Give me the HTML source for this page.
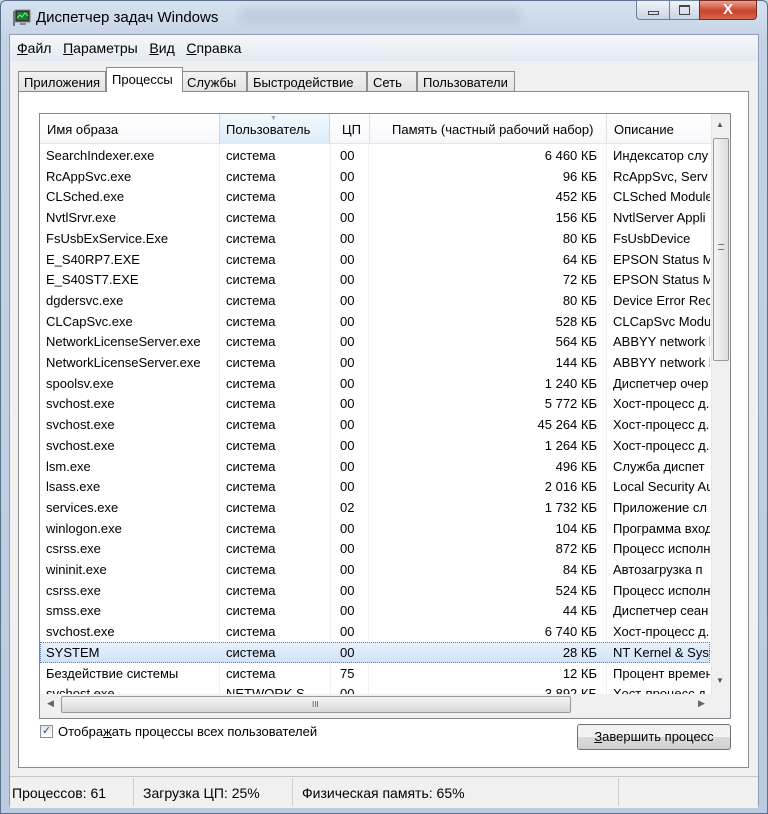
<!DOCTYPE html>
<html><head><meta charset="utf-8"><style>
*{box-sizing:border-box;margin:0;padding:0}
body{width:768px;height:814px;overflow:hidden;background:#c4d3e6;font-family:"Liberation Sans","DejaVu Sans",sans-serif;font-size:13px;color:#000;position:relative}
.a{position:absolute;white-space:nowrap}
.frame{position:absolute;left:0;top:0;width:768px;height:814px;background:linear-gradient(#d6e2f0,#c3d2e5 40px,#bccbdf);border:1px solid #5a6f8a;border-radius:6px 6px 0 0}
.inner{position:absolute;left:9px;top:34px;width:750px;height:772px;background:#f0f0f0;border:1px solid #8e9fb5}
.menu{position:absolute;left:10px;top:35px;width:748px;height:26px;background:linear-gradient(#f5f8fc,#e3e9f2)}
.tab{position:absolute;top:70px;height:22px;background:linear-gradient(#f2f2f2,#e1e1e1);border:1px solid #8c8c8c;border-bottom:none;padding:3px 5px 0;font-size:13px}
.panel{position:absolute;left:18px;top:91px;width:731px;height:677px;background:#fff;border:1px solid #8c8c8c}
.list{position:absolute;left:39px;top:113px;width:692px;height:606px;border:1px solid #828790;background:#fff;overflow:hidden}
.row{position:absolute;left:0;height:21px;width:670px}
.row span{position:absolute;top:3px;white-space:nowrap}
.status{position:absolute;left:10px;top:776px;width:748px;height:32px;background:#f0f0f0;border-top:1px solid #c8c8c8}
u{text-decoration:underline}
</style></head><body>
<div class="frame"></div>
<svg class="a" style="left:12px;top:8px" width="20" height="20" viewBox="0 0 20 20"><rect x="3" y="2" width="15" height="12" fill="#2a3a2a" stroke="#888"/><rect x="5" y="4" width="11" height="8" fill="#1f7a3a"/><polyline points="5,10 8,7 10,9 13,5 16,8" stroke="#6f6" fill="none"/><rect x="8" y="15" width="6" height="2" fill="#888"/><rect x="1" y="3" width="2" height="15" fill="#777"/></svg>
<div class="a" style="left:36px;top:9px;font-size:15px;color:#000">Диспетчер задач Windows</div>
<div class="a" style="left:240px;top:8px;width:280px;height:16px;background:#b8c6d8;filter:blur(4px);opacity:.7"></div>
<div class="a" style="left:636px;top:0;width:34px;height:20px;border:1px solid #6a7f99;border-radius:0 0 0 4px;background:linear-gradient(#eef3f9,#c8d5e5)"><div class="a" style="left:11px;top:10px;width:11px;height:4px;border:1px solid #444"></div></div>
<div class="a" style="left:669px;top:0;width:31px;height:20px;border:1px solid #6a7f99;background:linear-gradient(#eef3f9,#c8d5e5)"><div class="a" style="left:9px;top:4px;width:11px;height:10px;border:1px solid #444;border-top-width:2px"></div></div>
<div class="a" style="left:699px;top:0;width:58px;height:20px;border:1px solid #7a2a20;border-radius:0 0 4px 0;background:linear-gradient(#e8a494,#c7432c 55%,#d6664e);color:#fff;font-weight:bold;font-size:15px;text-align:center;line-height:18px">X</div>
<div class="inner"></div>
<div class="menu"></div>
<div class="a" style="left:17px;top:40px;font-size:14px"><u>Ф</u>айл &nbsp;&nbsp;<u>П</u>араметры &nbsp;&nbsp;<u>В</u>ид &nbsp;&nbsp;<u>С</u>правка</div>
<div class="tab" style="left:18px;width:88px;top:71px">Приложения</div>
<div class="tab" style="left:181px;width:66px;top:71px">Службы</div>
<div class="tab" style="left:247px;width:120px;top:71px">Быстродействие</div>
<div class="tab" style="left:367px;width:50px;top:71px">Сеть</div>
<div class="tab" style="left:417px;width:98px;top:71px">Пользователи</div>
<div class="panel"></div>
<div class="tab" style="left:106px;width:77px;top:67px;height:25px;background:#fff;z-index:2;padding-top:4px">Процессы</div>
<div class="list">
 <div class="a" style="left:0;top:0;width:692px;height:30px;background:linear-gradient(#fff,#f7f8fa);border-bottom:1px solid #e0e3e8"></div>
 <div class="a" style="left:179px;top:0;width:111px;height:30px;background:linear-gradient(#f2f9fd,#dcecf8);border-right:1px solid #d5d5d5;border-left:1px solid #d5d5d5"></div>
 <div class="a" style="left:329px;top:0;height:30px;border-left:1px solid #e0e0e0"></div>
 <div class="a" style="left:566px;top:0;height:30px;border-left:1px solid #e0e0e0"></div>
 <div class="a" style="left:230px;top:1px;font-size:7px;color:#8ab">▼</div>
 <div class="a" style="left:7px;top:8px">Имя образа</div>
 <div class="a" style="left:186px;top:8px">Пользователь</div>
 <div class="a" style="left:302px;top:8px">ЦП</div>
 <div class="a" style="left:352px;top:8px">Память (частный рабочий набор)</div>
 <div class="a" style="left:574px;top:8px">Описание</div>
 <div class="a" style="left:179px;top:30px;width:1px;height:560px;background:#eef0f2"></div>
 <div class="a" style="left:290px;top:30px;width:1px;height:560px;background:#eef0f2"></div>
 <div class="a" style="left:328px;top:30px;width:1px;height:560px;background:#eef0f2"></div>
 <div class="a" style="left:566px;top:30px;width:1px;height:560px;background:#eef0f2"></div>
 <div id="rows"></div>
 <div class="a" style="left:671px;top:0;width:19px;height:580px;background:#f0f0f0;border-left:1px solid #e6e6e6"></div>
 <div class="a" style="left:676px;top:6px;font-size:8px;color:#555">▲</div>
 <div class="a" style="left:673px;top:24px;width:16px;height:223px;border:1px solid #999;border-radius:2px;background:linear-gradient(90deg,#f4f4f4,#dedede)"><div class="a" style="left:4px;top:105px;width:6px;height:6px;border-top:1px solid #777;border-bottom:1px solid #777"></div></div>
 <div class="a" style="left:676px;top:562px;font-size:8px;color:#555">▼</div>
 <div class="a" style="left:0;top:580px;width:690px;height:24px;background:#f0f0f0"></div>
 <div class="a" style="left:7px;top:584px;font-size:9px;color:#666">◀</div>
 <div class="a" style="left:21px;top:582px;width:510px;height:17px;border:1px solid #999;border-radius:2px;background:linear-gradient(#f4f4f4,#d8d8d8)"><div class="a" style="left:250px;top:3px;font-size:8px;color:#555">III</div></div>
 <div class="a" style="left:658px;top:584px;font-size:9px;color:#666">▶</div>
</div>
<div class="a" style="left:40px;top:725px;width:13px;height:13px;border:1px solid #8f8f8f;background:linear-gradient(#dfe6ee,#fff);font-size:11px;line-height:11px;text-align:center;color:#2a4c7a">✓</div>
<div class="a" style="left:58px;top:724px">Отобра<u>ж</u>ать процессы всех пользователей</div>
<div class="a" style="left:577px;top:724px;width:154px;height:26px;border:1px solid #707070;border-radius:3px;background:linear-gradient(#f2f2f2 50%,#dcdcdc 50%,#cfcfcf);text-align:center;line-height:24px"><u>З</u>авершить процесс</div>
<div class="status"></div>
<div class="a" style="left:133px;top:778px;height:28px;border-left:1px solid #d0d0d0"></div>
<div class="a" style="left:292px;top:778px;height:28px;border-left:1px solid #d0d0d0"></div>
<div class="a" style="left:618px;top:778px;height:28px;border-left:1px solid #d0d0d0"></div>
<div class="a" style="left:12px;top:785px;font-size:14px">Процессов: 61</div>
<div class="a" style="left:143px;top:785px;font-size:14px">Загрузка ЦП: 25%</div>
<div class="a" style="left:302px;top:785px;font-size:14px">Физическая память: 65%</div>
<script>
var d=[["SearchIndexer.exe","00","6 460 КБ","Индексатор слу"],["RcAppSvc.exe","00","96 КБ","RcAppSvc,  Serv"],["CLSched.exe","00","452 КБ","CLSched Module"],["NvtlSrvr.exe","00","156 КБ","NvtlServer Appli"],["FsUsbExService.Exe","00","80 КБ","FsUsbDevice"],["E_S40RP7.EXE","00","64 КБ","EPSON Status M"],["E_S40ST7.EXE","00","72 КБ","EPSON Status M"],["dgdersvc.exe","00","80 КБ","Device Error Rec"],["CLCapSvc.exe","00","528 КБ","CLCapSvc Modul"],["NetworkLicenseServer.exe","00","564 КБ","ABBYY network l"],["NetworkLicenseServer.exe","00","144 КБ","ABBYY network l"],["spoolsv.exe","00","1 240 КБ","Диспетчер очер"],["svchost.exe","00","5 772 КБ","Хост-процесс д."],["svchost.exe","00","45 264 КБ","Хост-процесс д."],["svchost.exe","00","1 264 КБ","Хост-процесс д."],["lsm.exe","00","496 КБ","Служба диспет"],["lsass.exe","00","2 016 КБ","Local Security Au"],["services.exe","02","1 732 КБ","Приложение сл"],["winlogon.exe","00","104 КБ","Программа вход"],["csrss.exe","00","872 КБ","Процесс исполн"],["wininit.exe","00","84 КБ","Автозагрузка п"],["csrss.exe","00","524 КБ","Процесс исполн"],["smss.exe","00","44 КБ","Диспетчер сеан"],["svchost.exe","00","6 740 КБ","Хост-процесс д."],["SYSTEM","00","28 КБ","NT Kernel & Syst"],["Бездействие системы","75","12 КБ","Процент времен"],["svchost.exe","00","3 892 КБ","Хост-процесс д."]];
var h="";d.forEach(function(r,i){var t=31+i*20.7;var u=i==26?"NETWORK S":"система";var sel=i==24?"background:linear-gradient(#e8f2fc,#cfe3f8);outline:1px dotted #5a7fb0;outline-offset:-1px;":"";
h+='<div class="row" style="top:'+t+'px;'+sel+'"><span style="left:6px">'+r[0]+'</span><span style="left:186px">'+u+'</span><span style="left:300px">'+r[1]+'</span><span style="right:113px">'+r[2]+'</span><span style="left:573px;width:97px;overflow:hidden">'+r[3]+'</span></div>';});
document.getElementById("rows").innerHTML=h;
</script>
</body></html>
